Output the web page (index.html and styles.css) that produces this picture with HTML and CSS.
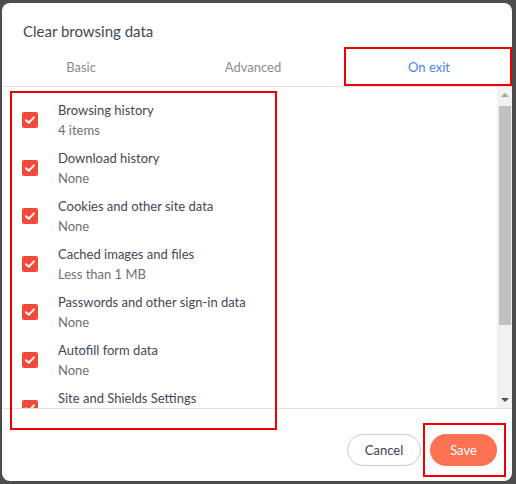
FILE: index.html
```html
<!DOCTYPE html>
<html lang="en">
<head>
    <meta charset="UTF-8">
    <title>Clear browsing data</title>
    <link rel="stylesheet" href="styles.css">
</head>
<body>
    <div class="dialog">
        <div class="title">Clear browsing data</div>

        <div class="tabs">
            <div class="tab tab-basic">Basic</div>
            <div class="tab tab-advanced">Advanced</div>
            <div class="tab tab-exit active">On exit</div>
        </div>

        <div class="body">
            <div class="list">
                <div class="item">
                    <span class="check"><svg viewBox="0 0 16 16"><path d="M4 8.2l2.7 2.6L12 5.4"/></svg></span>
                    <div class="text">
                        <div class="label">Browsing history</div>
                        <div class="sub">4 items</div>
                    </div>
                </div>
                <div class="item">
                    <span class="check"><svg viewBox="0 0 16 16"><path d="M4 8.2l2.7 2.6L12 5.4"/></svg></span>
                    <div class="text">
                        <div class="label">Download history</div>
                        <div class="sub">None</div>
                    </div>
                </div>
                <div class="item">
                    <span class="check"><svg viewBox="0 0 16 16"><path d="M4 8.2l2.7 2.6L12 5.4"/></svg></span>
                    <div class="text">
                        <div class="label">Cookies and other site data</div>
                        <div class="sub">None</div>
                    </div>
                </div>
                <div class="item">
                    <span class="check"><svg viewBox="0 0 16 16"><path d="M4 8.2l2.7 2.6L12 5.4"/></svg></span>
                    <div class="text">
                        <div class="label">Cached images and files</div>
                        <div class="sub">Less than 1 MB</div>
                    </div>
                </div>
                <div class="item">
                    <span class="check"><svg viewBox="0 0 16 16"><path d="M4 8.2l2.7 2.6L12 5.4"/></svg></span>
                    <div class="text">
                        <div class="label">Passwords and other sign-in data</div>
                        <div class="sub">None</div>
                    </div>
                </div>
                <div class="item">
                    <span class="check"><svg viewBox="0 0 16 16"><path d="M4 8.2l2.7 2.6L12 5.4"/></svg></span>
                    <div class="text">
                        <div class="label">Autofill form data</div>
                        <div class="sub">None</div>
                    </div>
                </div>
                <div class="item">
                    <span class="check"><svg viewBox="0 0 16 16"><path d="M4 8.2l2.7 2.6L12 5.4"/></svg></span>
                    <div class="text">
                        <div class="label">Site and Shields Settings</div>
                        <div class="sub sub-empty"></div>
                    </div>
                </div>
            </div>

            <div class="scrollbar">
                <span class="arrow-up"></span>
                <div class="track"><div class="thumb"></div></div>
                <span class="arrow-down"></span>
            </div>
        </div>

        <div class="footer">
            <button class="btn btn-cancel">Cancel</button>
            <button class="btn btn-save">Save</button>
        </div>
    </div>

    <!-- red annotation frames -->
    <div class="mark mark-tab"></div>
    <div class="mark mark-list"></div>
    <div class="mark mark-save"></div>
</body>
</html>
```

FILE: styles.css
```css
body {
    font-family: Lato, "Open Sans", sans-serif;
    background-color: #4d4d4d;
    margin: 0;
    padding: 3px 4px 3px 2px;
    height: 484px;
    box-sizing: border-box;
    overflow: hidden;
}
.dialog {
    background: #fff;
    border-radius: 8px;
    height: 478px;
    display: flex;
    flex-direction: column;
    overflow: hidden;
}
.title {
    font-size: 15px;
    color: #444858;
    padding: 18px 0 0 21px;
    height: 26px;
    line-height: 20px;
}
.tabs {
    display: flex;
    height: 40px;
    border-bottom: 1px solid #e2e2e2;
    box-sizing: border-box;
}
.tab {
    font-size: 13px;
    color: #8c8c8c;
    text-align: center;
    line-height: 39px;
    padding-top: 1px;
    box-sizing: border-box;
}
.tab-basic { width: 158px; }
.tab-advanced { width: 186px; }
.tab-exit { flex: 1; }
.tab.active {
    color: #4c86e6;
    border-bottom: 2px solid #2f7ce0;
    line-height: 38px;
}
.body {
    display: flex;
    height: 321px;
    border-bottom: 1px solid #e2e2e2;
}
.list {
    flex: 1;
    overflow: hidden;
    padding: 13px 0 0 20px;
}
.item {
    display: flex;
    align-items: center;
    gap: 20px;
    height: 40px;
    margin-bottom: 8px;
}
.check {
    width: 16px;
    height: 16px;
    border-radius: 2px;
    background: #f3493b;
    display: flex;
}
.check svg {
    width: 16px;
    height: 16px;
    fill: none;
    stroke: #fff;
    stroke-width: 2;
    stroke-linecap: round;
    stroke-linejoin: round;
}
.label {
    font-size: 13px;
    line-height: 20px;
    color: #444757;
}
.sub {
    font-size: 13px;
    line-height: 20px;
    height: 20px;
    color: #707070;
}
.scrollbar {
    width: 15px;
    background: #f1f1f1;
    display: flex;
    flex-direction: column;
    align-items: center;
}
.arrow-up, .arrow-down {
    width: 0;
    height: 0;
    border-left: 4px solid transparent;
    border-right: 4px solid transparent;
    margin: 6px 0;
}
.arrow-up { border-bottom: 4px solid #a3a3a3; }
.arrow-down { border-top: 4px solid #505050; }
.track {
    flex: 1;
    width: 100%;
    padding: 3px 1px 0 2px;
    box-sizing: border-box;
}
.thumb {
    height: 219px;
    background: #c1c1c1;
}
.footer {
    flex: 1;
    display: flex;
    justify-content: flex-end;
    align-items: flex-start;
    gap: 9px;
    padding: 25px 15px 0 0;
}
.btn {
    font-family: Lato, "Open Sans", sans-serif;
    font-size: 13px;
    height: 32px;
    border-radius: 16px;
    cursor: pointer;
}
.btn-cancel {
    width: 74px;
    background: #fff;
    border: 1px solid #c9c9d3;
    color: #3d4050;
}
.btn-save {
    width: 67px;
    background: #fb7352;
    border: none;
    color: #fff;
}
.mark {
    position: absolute;
    border: 2px solid #ee0000;
    box-sizing: border-box;
}
.mark-tab { left: 344px; top: 47px; width: 168px; height: 39px; }
.mark-list { left: 10px; top: 91px; width: 267px; height: 339px; }
.mark-save { left: 423px; top: 423px; width: 83px; height: 54px; }
```
